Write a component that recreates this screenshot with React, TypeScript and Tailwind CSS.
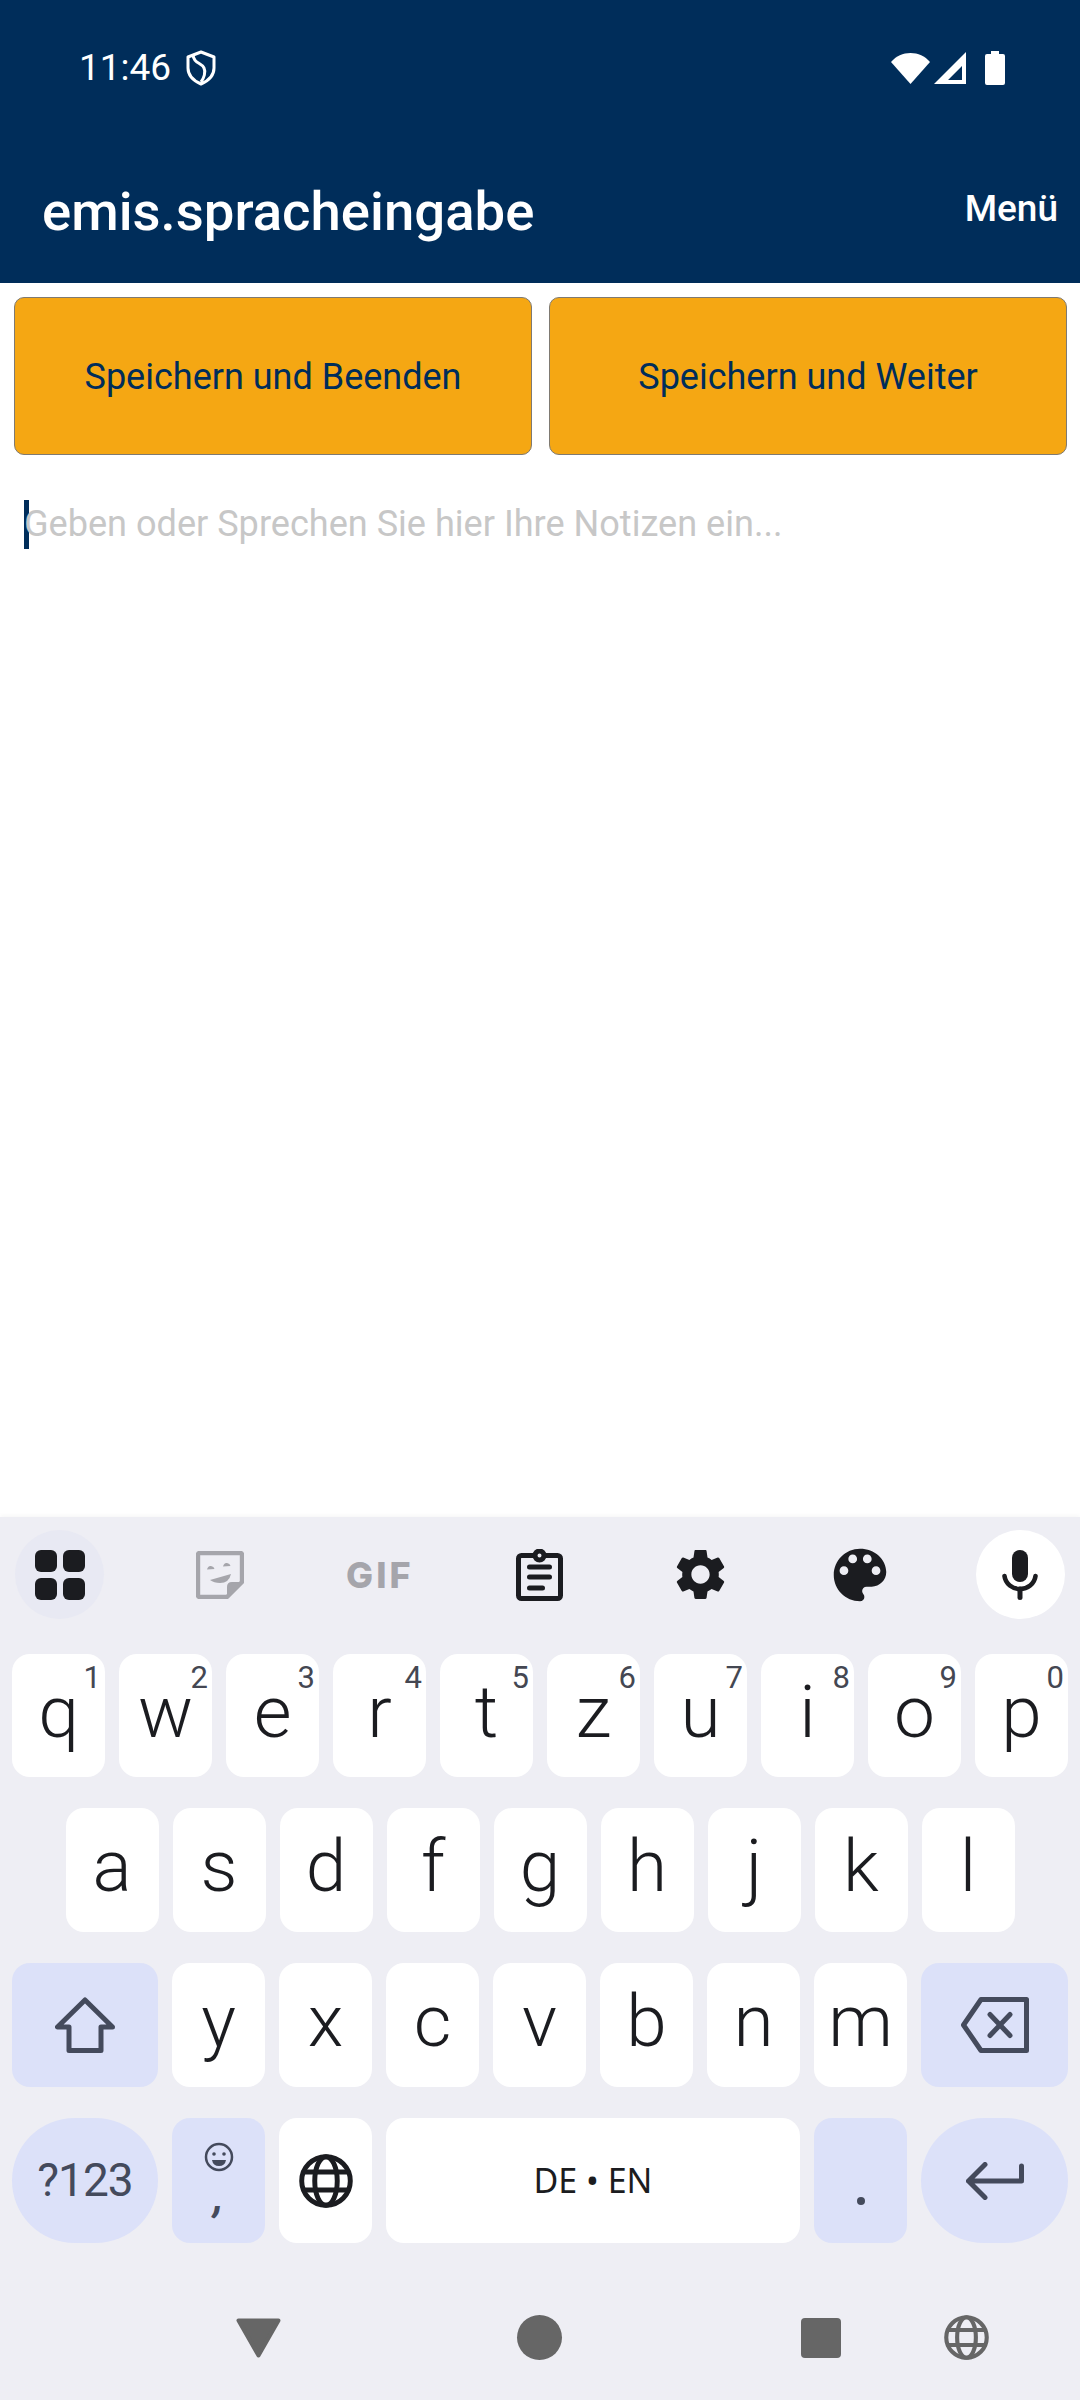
const keyBg = "bg-[#dce1f9]";

function Key({ label, hint }: { label: string; hint?: string }) {
  return (
    <div className="relative flex h-full w-[93px] shrink-0 items-start justify-center rounded-[18px] bg-white pt-[17px] font-['Roboto',sans-serif] text-[73px] leading-[82px] font-[350] text-[#1b1c20]">
      {label}
      {hint && (
        <span className="absolute top-[6px] right-[4px] text-[31px] leading-[36px] font-normal text-[#444752]">
          {hint}
        </span>
      )}
    </div>
  );
}

function Row({ keys, hints }: { keys: string; hints?: string }) {
  return (
    <>
      {keys.split("").map((k, i) => (
        <Key key={k} label={k} hint={hints ? hints[i] : undefined} />
      ))}
    </>
  );
}

function Globe({ className }: { className: string }) {
  return (
    <svg viewBox="0 0 48 48" fill="none" stroke="currentColor" strokeWidth="4.4" className={className}>
      <circle cx="24" cy="24" r="21.6" />
      <ellipse cx="24" cy="24" rx="10" ry="21.6" />
      <path d="M3 16h42M3 32h42" />
    </svg>
  );
}

function ToolSlot({ children, className }: { children: React.ReactNode; className?: string }) {
  return (
    <div className={`flex h-[89px] w-[89px] items-center justify-center rounded-full ${className ?? ""}`}>
      {children}
    </div>
  );
}

function Toolbar() {
  return (
    <div className="flex h-[137px] items-start justify-between px-[15px] pt-[13px] text-[#1b1c20]">
      <ToolSlot className="bg-[#e8e9f3]">
        <svg viewBox="0 0 50 50" className="h-[50px] w-[50px]" fill="currentColor">
          <rect x="0" y="0" width="22" height="22" rx="6" />
          <rect x="28" y="0" width="22" height="22" rx="6" />
          <rect x="0" y="28" width="22" height="22" rx="6" />
          <rect x="28" y="28" width="22" height="22" rx="6" />
        </svg>
      </ToolSlot>

      <ToolSlot>
        <svg viewBox="0 0 48 48" className="h-[48px] w-[48px] text-[#a5a5ab]" fill="none">
          <path
            d="M31 46H4q-2 0-2-2V4q0-2 2-2h40q2 0 2 2v27L31 46z"
            stroke="currentColor"
            strokeWidth="4.400"
            strokeLinejoin="round"
          />
          <path d="M46 31H36q-5 0-5 5v10z" fill="currentColor" />
          <path d="M11 18.500q1-4 4-3.500t3.500 3z" fill="currentColor" />
          <path d="M27 15.500q1-4 4-3.500t3.500 3z" fill="currentColor" />
          <path d="M14 29L35 23Q33 32 24 32Q18 32 14 29z" fill="currentColor" />
        </svg>
      </ToolSlot>

      <ToolSlot>
        <span className="font-['Inter',sans-serif] text-[36px] leading-none font-extrabold tracking-[3px] text-[#a5a5ab]">
          GIF
        </span>
      </ToolSlot>

      <ToolSlot>
        <svg viewBox="0 0 47 52" className="h-[52px] w-[47px]" fill="none" stroke="currentColor" strokeLinecap="round">
          <rect x="2.500" y="6.500" width="42" height="43" rx="3" strokeWidth="5" />
          <circle cx="23.500" cy="6.500" r="4.500" fill="#eeeef4" strokeWidth="5" />
          <path d="M13.500 18h20M13.500 28h20M13.500 39h13" strokeWidth="5" />
        </svg>
      </ToolSlot>

      <ToolSlot>
        <svg viewBox="0 0 24 24" className="h-[61px] w-[61px]" fill="currentColor">
          <path d="M19.14 12.94c.04-.3.06-.61.06-.94 0-.32-.02-.64-.07-.94l2.03-1.58c.18-.14.23-.41.12-.61l-1.92-3.32c-.12-.22-.37-.29-.59-.22l-2.39.96c-.5-.38-1.03-.7-1.62-.94l-.36-2.54c-.04-.24-.24-.41-.48-.41h-3.84c-.24 0-.43.17-.47.41l-.36 2.54c-.59.24-1.13.57-1.62.94l-2.39-.96c-.22-.08-.47 0-.59.22L2.74 8.87c-.12.21-.08.47.12.61l2.03 1.58c-.05.3-.09.63-.09.94s.02.64.07.94l-2.03 1.58c-.18.14-.23.41-.12.61l1.92 3.32c.12.22.37.29.59.22l2.39-.96c.5.38 1.03.7 1.62.94l.36 2.54c.05.24.24.41.48.41h3.84c.24 0 .44-.17.47-.41l.36-2.54c.59-.24 1.13-.56 1.62-.94l2.39.96c.22.08.47 0 .59-.22l1.92-3.32c.12-.22.07-.47-.12-.61l-2.01-1.58zM12 15.6c-1.98 0-3.6-1.62-3.6-3.6s1.62-3.6 3.6-3.6 3.6 1.62 3.6 3.6-1.62 3.6-3.6 3.6z" />
        </svg>
      </ToolSlot>

      <ToolSlot>
        <svg viewBox="0 0 24 24" className="h-[70px] w-[70px]" fill="currentColor">
          <path d="M12 3c-4.97 0-9 4.03-9 9s4.03 9 9 9c.83 0 1.5-.67 1.5-1.5 0-.39-.15-.74-.39-1.01-.23-.26-.38-.61-.38-.99 0-.83.67-1.5 1.5-1.5H16c2.76 0 5-2.24 5-5 0-4.42-4.03-8-9-8zm-5.5 9c-.83 0-1.5-.67-1.5-1.5S5.67 9 6.5 9 8 9.67 8 10.5 7.33 12 6.5 12zm3-4C8.67 8 8 7.33 8 6.5S8.67 5 9.5 5s1.5.67 1.5 1.5S10.33 8 9.5 8zm5 0c-.83 0-1.5-.67-1.5-1.5S13.67 5 14.5 5s1.5.67 1.5 1.5S15.33 8 14.5 8zm3 4c-.83 0-1.5-.67-1.5-1.5S16.67 9 17.5 9s1.5.67 1.5 1.5-.67 1.5-1.5 1.5z" />
        </svg>
      </ToolSlot>

      <ToolSlot className="bg-white">
        <svg viewBox="0 0 36 50" className="h-[50px] w-[36px]" fill="none" stroke="currentColor" strokeLinecap="round">
          <rect x="10" y="0" width="16" height="32" rx="8" fill="currentColor" stroke="none" />
          <path d="M2.500 26c1 8 8 13 15.500 13s14.500-5 15.500-13" strokeWidth="4.600" />
          <path d="M18 39v8.500" strokeWidth="5" />
        </svg>
      </ToolSlot>
    </div>
  );
}

function Keyboard() {
  return (
    <div className="flex h-[883px] shrink-0 flex-col bg-[#eeeef4] shadow-[0_-2px_4px_rgba(0,0,0,0.03)]">
      <Toolbar />
      <div className="flex flex-col gap-[31px] px-[12px]">
        <div className="flex h-[123px] gap-[14px]">
          <Row keys="qwertzuiop" hints="1234567890" />
        </div>
        <div className="flex h-[124px] justify-center gap-[14px]">
          <Row keys="asdfghjkl" />
        </div>
        <div className="flex h-[124px] gap-[14px]">
          <div className={`flex w-[146px] shrink-0 items-center justify-center rounded-[18px] ${keyBg}`}>
            <svg viewBox="0 0 60 56" className="h-[56px] w-[60px] text-[#444a5c]" fill="none" stroke="currentColor" strokeWidth="5" strokeLinejoin="round">
              <path d="M30 3L2.500 30H14V53.500H46V30H57.500L30 3z" />
            </svg>
          </div>
          <Row keys="yxcvbnm" />
          <div className={`flex w-[147px] shrink-0 items-center justify-center rounded-[18px] ${keyBg}`}>
            <svg viewBox="0 0 68 56" className="h-[56px] w-[68px] text-[#444a5c]" fill="none" stroke="currentColor" strokeWidth="5" strokeLinejoin="round" strokeLinecap="round">
              <path d="M20 2.500H65.500V53.500H20L2.500 28L20 2.500z" />
              <path d="M29 17.500L49 38.500M49 17.500L29 38.500" />
            </svg>
          </div>
        </div>
        <div className="flex h-[125px] gap-[14px]">
          <div className={`flex w-[146px] shrink-0 items-center justify-center rounded-full ${keyBg} font-['Roboto',sans-serif] text-[46px] tracking-[-1px] text-[#444a5c]`}>
            ?123
          </div>
          <div className={`flex w-[93px] shrink-0 flex-col items-center rounded-[18px] ${keyBg} pt-[24px] text-[#444a5c]`}>
            <svg viewBox="0 0 30 30" className="h-[30px] w-[30px]" fill="none" stroke="currentColor" strokeWidth="2.500">
              <circle cx="15" cy="15" r="13" />
              <circle cx="10" cy="12" r="1.800" fill="currentColor" stroke="none" />
              <circle cx="20" cy="12" r="1.800" fill="currentColor" stroke="none" />
              <path d="M8 18h14q-1 6-7 6t-7-6z" fill="currentColor" stroke="none" />
            </svg>
            <span className="mt-[2px] font-['Roboto',sans-serif] text-[42px] leading-[46px] font-bold italic">,</span>
          </div>
          <div className="flex w-[93px] shrink-0 items-center justify-center rounded-[18px] bg-white text-[#1b1c20]">
            <Globe className="h-[54px] w-[54px]" />
          </div>
          <div className="flex w-[414px] shrink-0 items-center justify-center rounded-[18px] bg-white font-['Noto_Sans',sans-serif] text-[34px] text-[#1b1c20]">
            DE • EN
          </div>
          <div className={`flex w-[93px] shrink-0 items-end justify-center rounded-[18px] ${keyBg} pb-[38px]`}>
            <span className="h-[8px] w-[8px] rounded-full bg-[#444a5c]" />
          </div>
          <div className={`flex w-[147px] shrink-0 items-center justify-center rounded-full ${keyBg}`}>
            <svg viewBox="0 0 58 38" className="h-[38px] w-[58px] text-[#444a5c]" fill="none" stroke="currentColor" strokeWidth="5" strokeLinejoin="round" strokeLinecap="round">
              <path d="M19 2.500L2.500 19 19 35.500M2.500 19H55.500V4" />
            </svg>
          </div>
        </div>
      </div>
      <div className="mt-[72px] flex items-center pl-[236px] text-[#666666]">
        <svg viewBox="0 0 45 40" className="h-[40px] w-[45px]" fill="currentColor" stroke="currentColor" strokeWidth="4" strokeLinejoin="round">
          <path d="M2.500 2.500H42.500L22.500 37.500z" />
        </svg>
        <span className="ml-[236px] h-[45px] w-[45px] rounded-full bg-[#666666]" />
        <span className="ml-[239px] h-[40px] w-[40px] rounded-[4px] bg-[#666666]" />
        <Globe className="ml-[103px] h-[45px] w-[45px]" />
      </div>
    </div>
  );
}

export default function App() {
  return (
    <div className="flex h-[2400px] w-[1080px] flex-col overflow-hidden bg-white font-['Roboto',sans-serif]">
      <header className="h-[283px] shrink-0 bg-[#002d5a] text-white">
        <div className="flex items-center pt-[50px] pr-[75px] pl-[79px]">
          <span className="text-[37px] leading-[36px]">11:46</span>
          <svg viewBox="0 0 30 36" className="ml-[15px] h-[36px] w-[30px]" fill="none" stroke="currentColor" strokeWidth="3" strokeLinejoin="round">
            <path d="M15 2L28 7V18C28 26 22 31 15 34 8 31 2 26 2 18V7z" />
            <path d="M7 5c1 9 8 7 11 13 2 4 0 10-3 14" />
          </svg>
          <div className="ml-auto flex items-center text-white">
            <svg viewBox="0 0 39 31" className="h-[31px] w-[39px]" fill="currentColor">
              <path d="M0 9C5 3 12 0 19.500 0S34 3 39 9L19.500 31z" />
            </svg>
            <svg viewBox="0 0 32 32" className="ml-[4px] h-[32px] w-[32px]" fill="currentColor" fillRule="evenodd">
              <path d="M32 0V32H0zM28 14L14 28H28z" />
            </svg>
            <svg viewBox="0 0 20 34" className="ml-[19px] h-[34px] w-[20px]" fill="currentColor">
              <path d="M6 0h8v3h4q2 0 2 2v27q0 2-2 2H2q-2 0-2-2V5q0-2 2-2h4z" />
            </svg>
          </div>
        </div>
        <div className="mt-[95px] flex items-center justify-between pr-[22px] pl-[42px]">
          <span className="text-[54.5px] leading-[60px] font-medium">emis.spracheingabe</span>
          <span className="mb-[4px] text-[37px] leading-[44px] font-medium">Menü</span>
        </div>
      </header>

      <main className="flex flex-1 flex-col">
        <div className="flex gap-[17px] pt-[14px] pr-[13px] pl-[14px]">
          {["Speichern und Beenden", "Speichern und Weiter"].map((label) => (
            <button
              key={label}
              className="flex h-[158px] flex-1 items-center justify-center rounded-[10px] border border-[#7f7a72] bg-[#f5a713] pt-[2px] text-[36px] text-[#002d5a]"
            >
              {label}
            </button>
          ))}
        </div>
        <div className="mt-[42px] flex items-center pl-[24px]">
          <span className="h-[49px] w-[5px] bg-[#002d5a]" />
          <span className="-ml-[5px] text-[36.1px] text-[#c7c7c7]">
            Geben oder Sprechen Sie hier Ihre Notizen ein...
          </span>
        </div>
      </main>

      <Keyboard />
    </div>
  );
}
